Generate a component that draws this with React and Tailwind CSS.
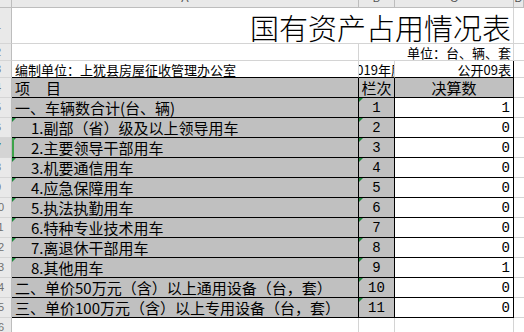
import React from "react";

const rows = [
  { n: 5, label: "一、车辆数合计(台、辆)", sub: false, col: "1", val: "1" },
  { n: 6, label: "1.副部（省）级及以上领导用车", sub: true, col: "2", val: "0" },
  { n: 7, label: "2.主要领导干部用车", sub: true, col: "3", val: "0", active: true },
  { n: 8, label: "3.机要通信用车", sub: true, col: "4", val: "0" },
  { n: 9, label: "4.应急保障用车", sub: true, col: "5", val: "0" },
  { n: 10, label: "5.执法执勤用车", sub: true, col: "6", val: "0" },
  { n: 11, label: "6.特种专业技术用车", sub: true, col: "7", val: "0" },
  { n: 12, label: "7.离退休干部用车", sub: true, col: "8", val: "0" },
  { n: 13, label: "8.其他用车", sub: true, col: "9", val: "1" },
  { n: 14, label: "二、单价50万元（含）以上通用设备（台，套）", sub: false, col: "10", val: "0" },
  { n: 15, label: "三、单价100万元（含）以上专用设备（台，套）", sub: false, col: "11", val: "0" },
];

// green "number stored as text" marker
const Flag = () => (
  <span className="absolute left-0 top-0 h-0 w-0 border-t-[4px] border-r-[4px] border-t-[#1e8a3c] border-r-transparent" />
);

function RowHead({ n, active }) {
  return (
    <div
      className={`w-[12px] shrink-0 overflow-hidden border-r border-b border-r-[#bdbdbd] border-b-[#d5d5d5] ${
        active ? "bg-[#d4d4d4] text-[#2a6b3e]" : "bg-[#e9e9e9] text-[#707070]"
      }`}
    >
      <div className="ml-[-16px] flex h-full w-[28px] items-center justify-center font-['Liberation_Sans',sans-serif] text-[11px] leading-none">
        {n}
      </div>
    </div>
  );
}

function ColHead({ w, label }) {
  return (
    <div className={`${w} shrink-0 overflow-hidden border-r border-b border-[#bdbdbd] bg-[#e9e9e9]`}>
      <div className="mt-[-11px] flex h-[18px] items-center justify-center font-['Liberation_Sans',sans-serif] text-[11px] text-[#555]">
        {label}
      </div>
    </div>
  );
}

export default function App() {
  return (
    <div className="h-[332px] w-[524px] overflow-hidden bg-white font-['Noto_Sans_CJK_SC',sans-serif] text-black">
      {/* column letters */}
      <div className="flex h-[8px]">
        <div className="w-[12px] shrink-0 border-r border-b border-[#bdbdbd] bg-[#e9e9e9]" />
        <ColHead w="w-[347px]" label="A" />
        <ColHead w="w-[36px]" label="B" />
        <ColHead w="w-[119px]" label="C" />
        <ColHead w="w-[10px]" label="D" />
      </div>

      {/* title */}
      <div className="flex h-[36px]">
        <RowHead n={1} />
        <div className="flex w-[502px] shrink-0 items-end justify-end border-r border-b border-[#d4d4d4] pr-[2px] pb-[1px] text-[29px] font-light leading-none">
          国有资产占用情况表
        </div>
        <div className="w-[10px] shrink-0 border-b border-[#d4d4d4]" />
      </div>

      {/* unit */}
      <div className="flex h-[17px]">
        <RowHead n={2} />
        <div className="w-[347px] shrink-0 border-r border-b border-[#d4d4d4]" />
        <div className="flex w-[155px] shrink-0 items-center justify-end border-r border-b border-[#d4d4d4] pr-[2px] text-[13px] leading-none">
          单位：台、辆、套
        </div>
        <div className="w-[10px] shrink-0 border-b border-[#d4d4d4]" />
      </div>

      {/* compiler line */}
      <div className="flex h-[17px]">
        <RowHead n={3} />
        <div className="flex w-[347px] shrink-0 items-center border-r border-r-[#d4d4d4] border-b border-b-black pl-[3px] text-[13px] leading-none">
          编制单位：上犹县房屋征收管理办公室
        </div>
        <div className="flex w-[36px] shrink-0 items-center justify-center overflow-hidden border-r border-r-[#d4d4d4] border-b border-b-black text-[13px] leading-none whitespace-nowrap">
          <span className="shrink-0">2019年度</span>
        </div>
        <div className="flex w-[119px] shrink-0 items-center justify-end border-r border-r-black border-b border-b-black pr-[2px] text-[13px] leading-none">
          公开09表
        </div>
        <div className="w-[10px] shrink-0 border-b border-[#d4d4d4]" />
      </div>

      {/* table header */}
      <div className="flex h-[20px]">
        <RowHead n={4} />
        <div className="flex w-[347px] shrink-0 items-center gap-[16px] border-r border-b border-black bg-[#c0c0c0] pl-[3px] text-[15px] leading-none">
          <span>项</span>
          <span>目</span>
        </div>
        <div className="flex w-[36px] shrink-0 items-center justify-center border-r border-b border-black bg-[#c0c0c0] text-[15px] leading-none">
          栏次
        </div>
        <div className="flex w-[119px] shrink-0 items-center justify-center border-r border-b border-black bg-[#c0c0c0] text-[15px] leading-none">
          决算数
        </div>
        <div className="w-[10px] shrink-0 border-b border-[#d4d4d4]" />
      </div>

      {rows.map((r) => (
        <div key={r.n} className="flex h-[20px]">
          <RowHead n={r.n} active={r.active} />
          <div
            className={`relative flex w-[347px] shrink-0 items-center border-r border-b border-black bg-[#c0c0c0] text-[15px] leading-none whitespace-nowrap ${
              r.sub ? "pl-[19px]" : "pl-[3px]"
            }`}
          >
            {r.sub && <Flag />}
            {r.active && <span className="absolute left-0 top-0 bottom-0 w-[2px] bg-[#3da34a]" />}
            {r.label}
          </div>
          <div className="relative flex w-[36px] shrink-0 items-center justify-center border-r border-b border-black bg-[#c0c0c0] font-['Liberation_Mono',monospace] text-[14px] leading-none">
            <Flag />
            {r.col}
          </div>
          <div className="flex w-[119px] shrink-0 items-center justify-end border-r border-b border-black bg-white pr-[3px] font-['Liberation_Mono',monospace] text-[14px] leading-none">
            {r.val}
          </div>
          <div className="w-[10px] shrink-0 border-b border-[#d4d4d4]" />
        </div>
      ))}

      {/* empty row */}
      <div className="flex h-[20px]">
        <RowHead n={16} />
        <div className="w-[347px] shrink-0 border-r border-b border-[#d4d4d4]" />
        <div className="w-[36px] shrink-0 border-r border-b border-[#d4d4d4]" />
        <div className="w-[119px] shrink-0 border-r border-b border-[#d4d4d4]" />
        <div className="w-[10px] shrink-0 border-b border-[#d4d4d4]" />
      </div>
    </div>
  );
}
